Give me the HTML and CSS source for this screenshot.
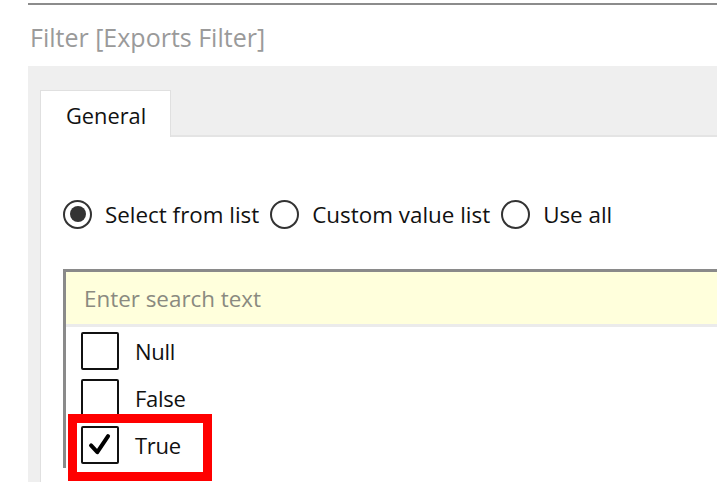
FILE: index.html
```html
<!DOCTYPE html>
<html>
<head>
<meta charset="utf-8">
<link rel="stylesheet" href="styles.css">
</head>
<body>
<div class="topline"></div>
<h1 class="title">Filter [Exports Filter]</h1>
<div class="panel">
  <div class="tabs">
    <div class="tab">General</div>
    <div class="tab-rest"></div>
  </div>
  <div class="content">
    <div class="radios">
      <label class="radio"><span class="circle checked"></span>Select from list</label>
      <label class="radio"><span class="circle"></span>Custom value list</label>
      <label class="radio"><span class="circle"></span>Use all</label>
    </div>
    <div class="listbox">
      <div class="search">Enter search text</div>
      <div class="items">
        <div class="item"><span class="box"></span>Null</div>
        <div class="item"><span class="box"></span>False</div>
        <div class="item"><span class="box"><svg viewBox="0 0 38 38" width="34" height="34"><path d="M9 19.5 L16 27 L28 9" fill="none" stroke="#000" stroke-width="4.5" stroke-linecap="round" stroke-linejoin="round"/></svg></span>True</div>
        <div class="highlight"></div>
      </div>
    </div>
  </div>
</div>
</body>
</html>
```

FILE: styles.css
```css
html, body {
  margin: 0;
  padding: 0;
  background: #fff;
  height: 100%;
  overflow: hidden;
  font-family: "Open Sans", "Noto Sans", sans-serif;
}
.topline {
  margin: 3px 0 0 28px;
  height: 2px;
  background: #8c8c8c;
}
.title {
  margin: 0 0 0 30px;
  height: 61px;
  line-height: 64px;
  font-size: 25px;
  font-weight: normal;
  color: #9a9a9a;
}
.panel {
  margin-left: 28px;
  background: #efefef;
  padding: 24px 0 0 12px;
  height: 416px;
  box-sizing: border-box;
  display: flex;
  flex-direction: column;
}
.tabs {
  display: flex;
  height: 47px;
  flex: none;
}
.tab {
  width: 131px;
  background: #fff;
  border: 1px solid #e0e0e0;
  border-bottom: none;
  font-size: 21.8px;
  color: #111;
  padding-left: 25px;
  box-sizing: border-box;
  line-height: 50px;
}
.tab-rest {
  flex: 1;
  border-bottom: 2px solid #e4e4e4;
}
.content {
  flex: 1;
  background: #fff;
  border-left: 1px solid #e0e0e0;
  padding: 62px 0 0 22px;
  overflow: hidden;
}
.radios {
  display: flex;
  align-items: center;
  height: 30px;
  font-size: 22.4px;
  color: #111;
}
.radio {
  display: flex;
  align-items: center;
  margin-right: 11px;
}
.circle {
  width: 25px;
  height: 25px;
  border: 2px solid #333;
  border-radius: 50%;
  margin-right: 13px;
  display: flex;
  align-items: center;
  justify-content: center;
  box-sizing: content-box;
}
.circle.checked::after {
  content: "";
  width: 16px;
  height: 16px;
  border-radius: 50%;
  background: #333;
}
.listbox {
  margin-top: 40px;
  border-top: 3px solid #8a8a8a;
  border-left: 3px solid #8a8a8a;
}
.search {
  height: 52px;
  background: #ffffdc;
  border-bottom: 3px solid #ebebeb;
  padding-left: 18px;
  line-height: 53px;
  font-size: 22.4px;
  color: #8a8a80;
}
.items {
  position: relative;
  padding: 0 0 0 15px;
}
.item {
  display: flex;
  align-items: center;
  height: 47px;
  font-size: 22px;
  color: #111;
  letter-spacing: -0.3px;
}
.box {
  width: 34px;
  height: 34px;
  border: 2px solid #111;
  border-radius: 2px;
  margin-right: 16px;
  display: flex;
  align-items: center;
  justify-content: center;
  background: #fff;
}
.highlight {
  position: absolute;
  left: 2px;
  top: 87px;
  width: 126px;
  height: 49px;
  border: 9px solid #ff0000;
}
```
